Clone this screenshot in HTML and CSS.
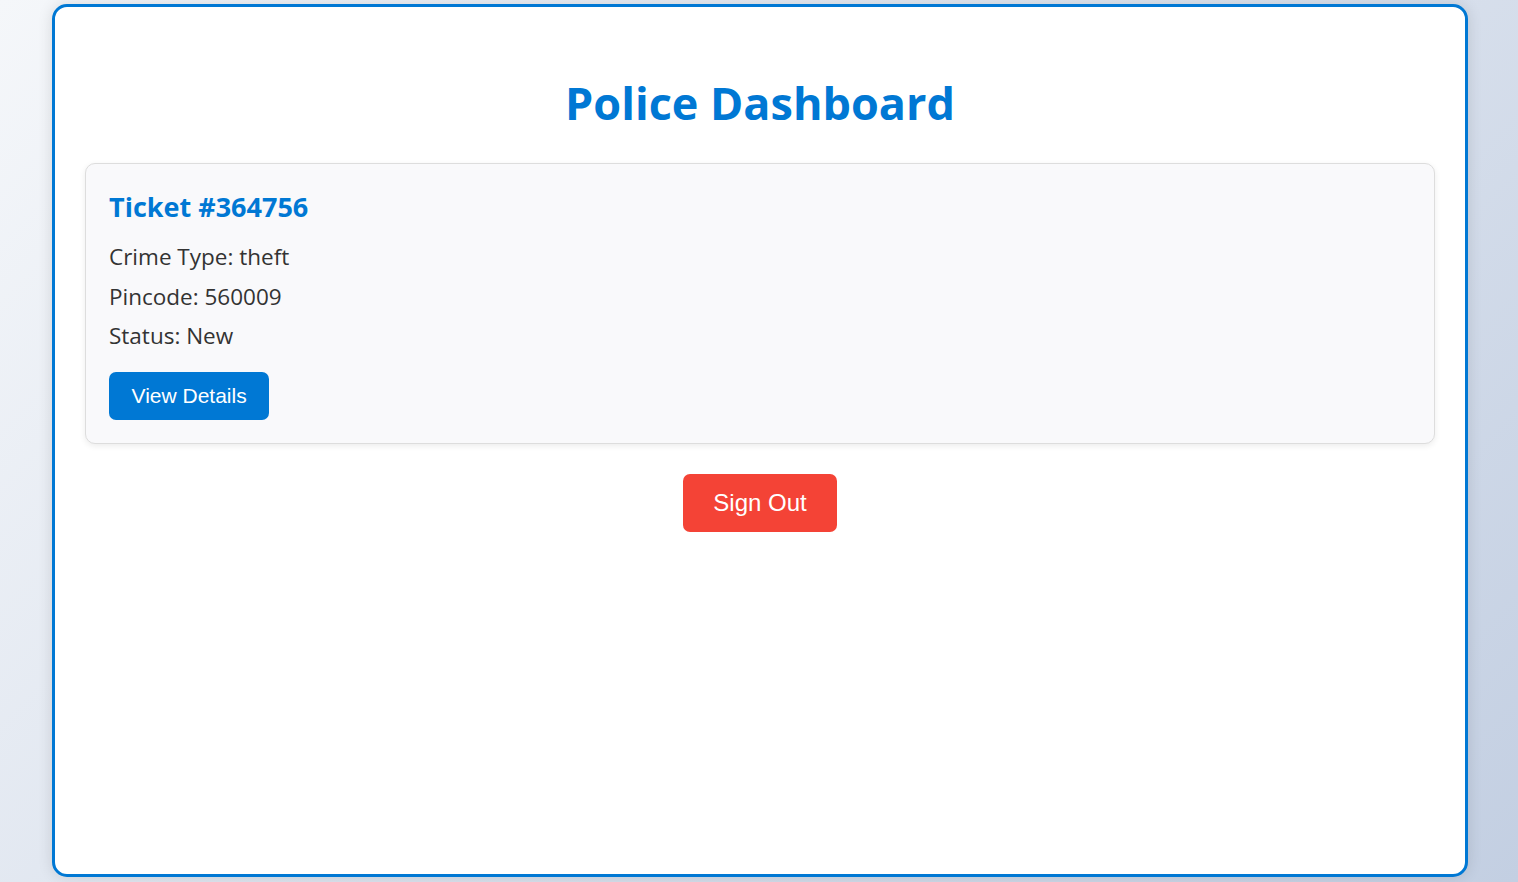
FILE: index.html
```html
<!DOCTYPE html>
<html lang="en">
<head>
<meta charset="utf-8">
<title>Police Dashboard</title>
<link rel="stylesheet" href="styles.css">
</head>
<body>
  <main class="container">
    <h1 class="title">Police Dashboard</h1>
    <section class="ticket-card">
      <h3 class="ticket-title">Ticket #364756</h3>
      <p class="ticket-line">Crime Type: theft</p>
      <p class="ticket-line">Pincode: 560009</p>
      <p class="ticket-line">Status: New</p>
      <button class="btn btn-view">View Details</button>
    </section>
    <div class="actions">
      <button class="btn btn-signout">Sign Out</button>
    </div>
  </main>
</body>
</html>
```

FILE: styles.css
```css
* { box-sizing: border-box; }

html, body { height: 100%; }

body {
  margin: 0;
  padding: 4px 0 0 2px;
  background: linear-gradient(135deg, #f5f7fa 0%, #c3cfe2 100%);
  font-family: "Open Sans", "Noto Sans", sans-serif;
  color: #333;
  overflow: hidden;
}

.container {
  width: 1416px;
  height: 873px;
  margin: 0 auto;
  padding: 30px;
  background: #fff;
  border: 3px solid #0078d4;
  border-radius: 15px;
  box-shadow: 0 0 15px rgba(0, 0, 0, 0.12);
}

.title {
  margin: 34px 0 28px;
  text-align: center;
  color: #0078d4;
  font-size: 45px;
  font-weight: 700;
  line-height: 64px;
}

.ticket-card {
  display: flex;
  flex-direction: column;
  align-items: flex-start;
  padding: 24px 22px 23px 23px;
  background: #f9f9fb;
  border: 1px solid #ddd;
  border-radius: 10px;
  box-shadow: 0 2px 6px rgba(0, 0, 0, 0.08);
}

.ticket-title {
  margin: 0 0 15px;
  color: #0078d4;
  font-size: 27px;
  font-weight: 700;
  line-height: 38px;
}

.ticket-line {
  margin: 0 0 7.5px;
  font-size: 22.5px;
  line-height: 32px;
  color: #333;
}

.btn {
  border: none;
  color: #fff;
  font-family: "Liberation Sans", Arial, sans-serif;
  cursor: pointer;
}

.btn-view {
  margin-top: 12.5px;
  padding: 12px 22.5px;
  font-size: 21px;
  line-height: 24px;
  background: #0078d4;
  border-radius: 7px;
}

.actions {
  display: flex;
  justify-content: center;
  margin-top: 30px;
}

.btn-signout {
  padding: 15px 30px;
  font-size: 24px;
  line-height: 28px;
  background: #f44336;
  border-radius: 7px;
}
```
